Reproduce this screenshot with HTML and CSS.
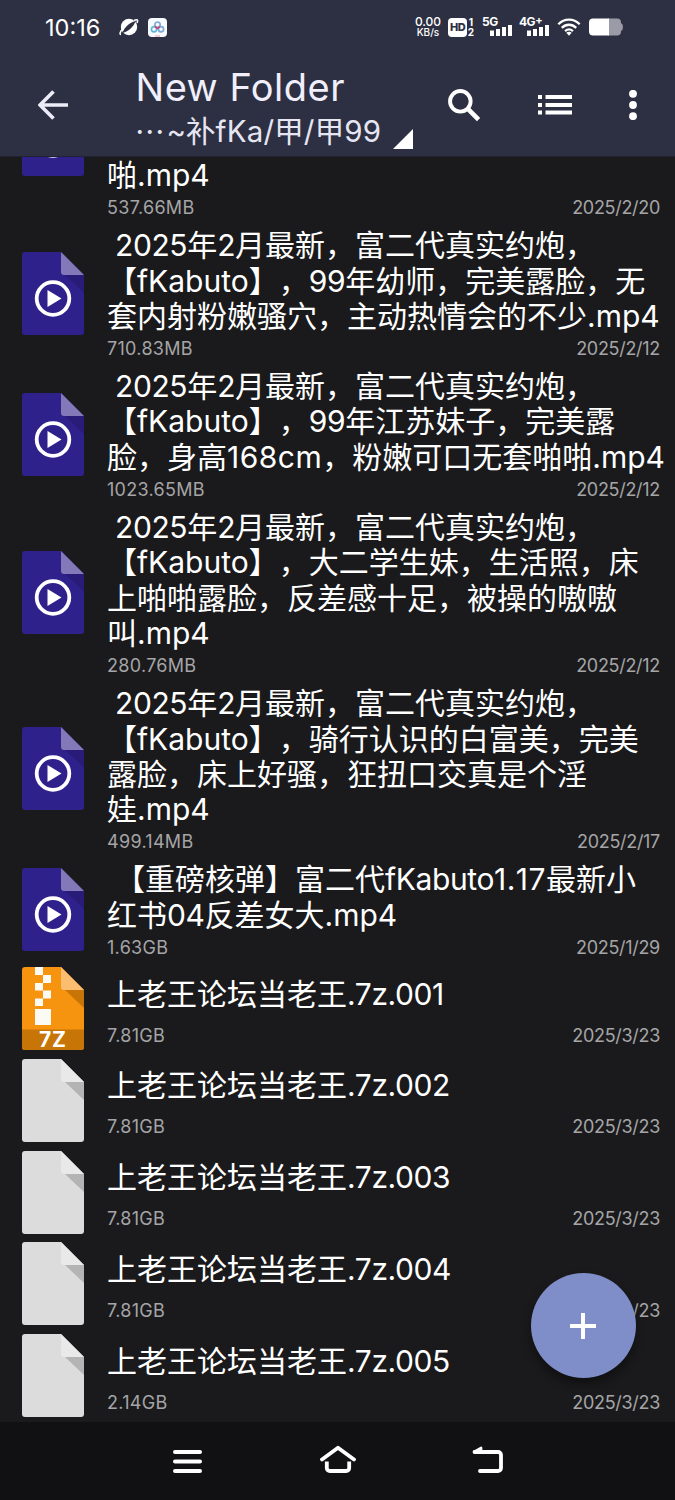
FILE: index.html
```html
<!DOCTYPE html>
<html lang="zh-CN">
<head>
<meta charset="utf-8">
<title>New Folder</title>
<link rel="stylesheet" href="styles.css">
</head>
<body>
<svg class="defs" width="0" height="0">
  <symbol id="video" viewBox="0 0 62 83">
    <path fill="#2f218b" d="M3 0H39L62 23V80a3 3 0 0 1-3 3H3a3 3 0 0 1-3-3V3a3 3 0 0 1 3-3Z"/>
    <path fill="#291c78" d="M43 23H62V41Z"/>
    <path fill="#8378b8" d="M39 0L62 23H42a3 3 0 0 1-3-3Z"/>
    <circle cx="31" cy="46.500" r="16.300" fill="none" stroke="#fff" stroke-width="3.800"/>
    <path fill="#fff" d="M25.500 38V55L39.500 46.500Z"/>
  </symbol>
  <symbol id="zip" viewBox="0 0 62 83">
    <path fill="#f6930f" d="M3 0H39L62 23V80a3 3 0 0 1-3 3H3a3 3 0 0 1-3-3V3a3 3 0 0 1 3-3Z"/>
    <path fill="#c87508" d="M43 23H62V41Z"/>
    <path fill="#fbbd70" d="M39 0L62 23H42a3 3 0 0 1-3-3Z"/>
    <path fill="#c87508" d="M0 62.500H62V80a3 3 0 0 1-3 3H3a3 3 0 0 1-3-3Z"/>
    <path fill="#fbfaf5" d="M13 0h8v8h-8zM21 8h8v8h-8zM13 16h8v7.500h-8zM21 23.500h8v8h-8zM13 31.500h8v7.500h-8zM13 42h16v16H13z"/>
    <text class="zip-label" x="31" y="80" text-anchor="middle">7Z</text>
  </symbol>
  <symbol id="file" viewBox="0 0 62 83">
    <path fill="#dcdcdd" d="M3 0H39L62 23V80a3 3 0 0 1-3 3H3a3 3 0 0 1-3-3V3a3 3 0 0 1 3-3Z"/>
    <path fill="#b4b4b5" d="M43 23H62V41Z"/>
    <path fill="#e9e9ea" d="M39 0L62 23H42a3 3 0 0 1-3-3Z"/>
  </symbol>
</svg>

<header class="header">
  <div class="status">
    <span class="clock">10:16</span>
    <svg class="planet" width="20" height="18" viewBox="0 0 20 18">
      <circle cx="10" cy="9" r="8.200" fill="#fff"/>
      <path d="M3.500 15C5 9.500 10.500 4.500 16.500 3C15 8.500 9.500 13.500 3.500 15Z" fill="#2d3042"/>
      <path d="M3 11.500C.8 14.500 .5 16.500 2 16.500M15 2.500C18 1 19.500 1.500 18 5" fill="none" stroke="#fff" stroke-width="1.600"/>
    </svg>
    <svg class="cloud" width="19" height="19" viewBox="0 0 19 19">
      <rect width="19" height="19" rx="4" fill="#f7fbff"/>
      <g fill="none" stroke-width="1.700"><circle cx="9.500" cy="6.700" r="2.700" stroke="#7dabd8"/><circle cx="6" cy="11.300" r="2.600" stroke="#62b6dd"/><circle cx="13" cy="11.300" r="2.600" stroke="#7aa9dc"/><path d="M7 8.500L9.500 10.500L12 8.500" stroke="#c64b7a"/></g>
      <path d="M7 18h5" stroke="#f0a9b5" stroke-width="1.200"/>
    </svg>
    <span class="rate"><span class="rate-value">0.00</span><span class="rate-unit">KB/s</span></span>
    <span class="hd">HD</span>
    <span class="sims"><span>1</span><span>2</span></span>
    <span class="signal five"><span class="net">5G</span><svg width="22" height="11" viewBox="0 0 22 11"><path fill="#fff" d="M0 5.500h4V11H0zM6 4h4v7H6zM12 2h4v9h-4zM18 0h4v11h-4z"/></svg></span>
    <span class="signal"><span class="net">4G<sup>+</sup></span><svg width="22" height="11" viewBox="0 0 22 11"><path fill="#fff" d="M0 5.500h4V11H0zM6 4h4v7H6zM12 2h4v9h-4zM18 0h4v11h-4z"/></svg></span>
    <svg class="wifi" width="24" height="18" viewBox="0 0 24 18"><g fill="none" stroke="#fff" stroke-width="2.300"><path d="M1.300 6.200C7.500 0 16.500 0 22.700 6.200"/><path d="M4.800 9.900C9 5.700 15 5.700 19.200 9.900"/><path d="M8.100 13.200C10.500 11 13.500 11 15.900 13.200"/></g><path d="M9.300 14.800q2.700-2 5.400 0L12 17.800Z" fill="#fff"/></svg>
    <svg class="battery" width="34" height="18" viewBox="0 0 34 18"><path fill="#9a9ba6" d="M19 .5h9a4 4 0 0 1 4 4V5q2 1 2 4t-2 4v.5a4 4 0 0 1-4 4h-9Z"/><path fill="#fff" d="M4 .5h16v17H4a4 4 0 0 1-4-4v-9a4 4 0 0 1 4-4Z"/></svg>
  </div>
  <div class="toolbar">
    <svg class="back" width="30" height="30" viewBox="0 0 30 30"><path d="M30 15H2.500M15.500 1.500L2 15L15.500 28.500" fill="none" stroke="#ecebf8" stroke-width="3.700"/></svg>
    <div class="heading">
      <div class="folder">New Folder</div>
      <div class="path"><span class="dots">···</span>~补<span class="pl">fKa/</span>甲<span class="pl">/</span>甲<span class="pl">99</span></div>
    </div>
    <svg class="corner" width="20" height="20" viewBox="0 0 20 20"><path d="M20 0V20H0Z" fill="#fff"/></svg>
    <svg class="search" width="33" height="33" viewBox="0 0 34 34"><g fill="none" stroke="#fff"><circle cx="12.700" cy="12.700" r="10.600" stroke-width="4"/><path d="M20.500 20.500L31.500 31.500" stroke-width="4.800"/></g></svg>
    <svg class="listicon" width="34" height="20" viewBox="0 0 34 20"><path fill="#fff" d="M0 0h4v4H0zM7.500 0H34v4H7.500zM0 8h4v4H0zM7.500 8H34v4H7.500zM0 15.500h4v4H0zM7.500 15.500H34v4H7.500z"/></svg>
    <svg class="more" width="8" height="30" viewBox="0 0 8 30"><g fill="#fff"><circle cx="4" cy="3.800" r="3.900"/><circle cx="4" cy="15" r="3.900"/><circle cx="4" cy="26.200" r="3.900"/></g></svg>
  </div>
</header>

<main class="list">
  <div class="row clipped"><svg class="icon"><use href="#video"/></svg><div class="info"><div class="name">啪<i class="loose">.mp4</i></div><div class="meta"><span>537.66MB</span><span class="date">2025/2/20</span></div></div></div>
  <div class="row"><svg class="icon"><use href="#video"/></svg><div class="info"><div class="name"><i> 2025</i>年<i>2</i>月最新，富二代真实约炮，<br>【<i class="loose">fKabuto</i>】，<i>99</i>年幼师，完美露脸，无<br>套内射粉嫩骚穴，主动热情会的不少<i class="loose">.mp4</i></div><div class="meta"><span>710.83MB</span><span class="date">2025/2/12</span></div></div></div>
  <div class="row"><svg class="icon"><use href="#video"/></svg><div class="info"><div class="name"><i> 2025</i>年<i>2</i>月最新，富二代真实约炮，<br>【<i class="loose">fKabuto</i>】，<i>99</i>年江苏妹子，完美露<br>脸，身高<i class="wide">168cm</i>，粉嫩可口无套啪啪<i class="loose">.mp4</i></div><div class="meta"><span>1023.65MB</span><span class="date">2025/2/12</span></div></div></div>
  <div class="row"><svg class="icon"><use href="#video"/></svg><div class="info"><div class="name"><i> 2025</i>年<i>2</i>月最新，富二代真实约炮，<br>【<i class="loose">fKabuto</i>】，大二学生妹，生活照，床<br>上啪啪露脸，反差感十足，被操的嗷嗷<br>叫<i class="loose">.mp4</i></div><div class="meta"><span>280.76MB</span><span class="date">2025/2/12</span></div></div></div>
  <div class="row"><svg class="icon"><use href="#video"/></svg><div class="info"><div class="name"><i> 2025</i>年<i>2</i>月最新，富二代真实约炮，<br>【<i class="loose">fKabuto</i>】，骑行认识的白富美，完美<br>露脸，床上好骚，狂扭口交真是个淫<br>娃<i class="loose">.mp4</i></div><div class="meta"><span>499.14MB</span><span class="date">2025/2/17</span></div></div></div>
  <div class="row"><svg class="icon"><use href="#video"/></svg><div class="info"><div class="name"><i> </i>【重磅核弹】富二代<i>fKabuto</i><i class="wide">1.17</i>最新小<br>红书<i>04</i>反差女大<i class="loose">.mp4</i></div><div class="meta"><span>1.63GB</span><span class="date">2025/1/29</span></div></div></div>
  <div class="row single"><svg class="icon"><use href="#zip"/></svg><div class="info"><div class="name">上老王论坛当老王<i>.7z.001</i></div><div class="meta"><span>7.81GB</span><span class="date">2025/3/23</span></div></div></div>
  <div class="row single"><svg class="icon"><use href="#file"/></svg><div class="info"><div class="name">上老王论坛当老王<i>.7z.002</i></div><div class="meta"><span>7.81GB</span><span class="date">2025/3/23</span></div></div></div>
  <div class="row single"><svg class="icon"><use href="#file"/></svg><div class="info"><div class="name">上老王论坛当老王<i>.7z.003</i></div><div class="meta"><span>7.81GB</span><span class="date">2025/3/23</span></div></div></div>
  <div class="row single"><svg class="icon"><use href="#file"/></svg><div class="info"><div class="name">上老王论坛当老王<i>.7z.004</i></div><div class="meta"><span>7.81GB</span><span class="date">2025/3/23</span></div></div></div>
  <div class="row single"><svg class="icon"><use href="#file"/></svg><div class="info"><div class="name">上老王论坛当老王<i>.7z.005</i></div><div class="meta"><span>2.14GB</span><span class="date">2025/3/23</span></div></div></div>
</main>

<button class="fab" aria-label="add"><svg width="28" height="28" viewBox="0 0 28 28"><path d="M14 1V27M1 14H27" stroke="#fff" stroke-width="4"/></svg></button>

<nav class="nav">
  <svg width="36" height="36" viewBox="0 0 36 36"><path d="M5 9H30M5 18.500H30M5 28H30" stroke="#fff" stroke-width="4" stroke-linecap="round"/></svg>
  <svg width="36" height="36" viewBox="0 0 36 36"><g fill="none" stroke="#fff" stroke-width="3.800" stroke-linecap="round" stroke-linejoin="round"><path d="M2 16.500L18 4.800L34 16.500"/><path stroke-linecap="butt" d="M6.800 18.500V25a3 3 0 0 0 3 3H26.200a3 3 0 0 0 3-3V18.500"/></g></svg>
  <svg width="36" height="36" viewBox="0 0 36 36"><path d="M4.500 9H28a3 3 0 0 1 3 3V25a3 3 0 0 1-3 3H10" fill="none" stroke="#fff" stroke-width="3.800" stroke-linecap="round"/><path d="M3 8L11 3.500q2 0 1.200 4L11 10H4Z" fill="#fff"/></svg>
</nav>
</body>
</html>
```

FILE: styles.css
```css
* { box-sizing: border-box; }
body {
  margin: 0;
  width: 675px;
  height: 1500px;
  overflow: hidden;
  display: flex;
  flex-direction: column;
  position: relative;
  background: #1a1a1c;
  color: #fff;
  font-family: Inter, "Noto Sans CJK SC", sans-serif;
}
svg { display: block; flex: none; }
.defs { position: absolute; }

.header {
  height: 157px;
  flex: none;
  background: #2d3042;
  border-bottom: 1px solid #202230;
}
.status {
  height: 54px;
  display: flex;
  align-items: center;
  padding-left: 45px;
}
.clock { font-size: 23.500px; width: 74px; letter-spacing: 0; white-space: nowrap; }
.cloud { margin-left: 9px; }
.rate { margin-left: 247px; width: 28px; display: flex; flex-direction: column; align-items: center; white-space: nowrap; }
.rate-value { font-size: 12px; line-height: 11px; font-weight: 500; margin-top: -2px; }
.rate-unit { font-size: 10px; line-height: 10px; font-weight: 500; }
.hd {
  width: 19px;
  height: 19px;
  margin-left: 6px;
  border-radius: 4px;
  background: #fff;
  color: #2d3042;
  font-size: 11px;
  line-height: 19px;
  font-weight: 800;
  text-align: center;
  letter-spacing: -0.500px;
}
.sims { width: 8px; display: flex; flex-direction: column; align-items: center; font-size: 10px; line-height: 10px; font-weight: 700; }
.signal { width: 30px; height: 20px; margin-left: 7px; display: flex; flex-direction: column; align-items: flex-end; }
.net { align-self: flex-start; height: 8px; font-size: 12px; line-height: 10px; font-weight: 700; white-space: nowrap; letter-spacing: -0.500px; }
.net sup { font-size: 11px; line-height: 0; vertical-align: 2px; }
.wifi { margin-left: 8px; }
.battery { margin-left: 8px; }

.toolbar {
  height: 102px;
  display: flex;
  align-items: center;
  padding-left: 37.500px;
}
.heading { margin-left: 68px; width: 246px; white-space: nowrap; }
.folder { font-size: 38px; line-height: 44px; color: #f0effb; margin-top: 8px; letter-spacing: 0.500px; }
.path { display: flex; font-size: 29.500px; line-height: 44px; color: #e6e6f2; }
.dots { width: 31px; letter-spacing: 1.500px; }
.pl { letter-spacing: 0.200px; }
.corner { margin: 75px 0 0 11px; align-self: flex-start; }
.search { margin-left: 35px; }
.listicon { margin-left: 57px; }
.more { margin-left: 57px; }

.list {
  flex: none;
  height: 1264.500px;
  overflow: hidden;
  display: flex;
  flex-direction: column;
  justify-content: flex-end;
}
.row {
  flex: none;
  display: flex;
  align-items: center;
  padding-left: 21.500px;
}
.icon { width: 62px; height: 83px; }
.info {
  align-self: stretch;
  flex: 1;
  min-width: 0;
  display: flex;
  flex-direction: column;
  margin-left: 23.500px;
  padding: 3.500px 15px 2px 0;
}
.clipped { height: 176.200px; }
.clipped .info { justify-content: flex-end; }
.name {
  font-size: 30px;
  line-height: 35.300px;
  white-space: nowrap;
  font-family: "Noto Sans CJK SC", sans-serif;
  text-spacing-trim: space-all;
}
.name i {
  font-family: Inter, sans-serif;
  font-style: normal;
  line-height: 0;
  white-space: pre;
  letter-spacing: -0.400px;
}
.name .loose { letter-spacing: 0; }
.name .wide { letter-spacing: 0.500px; font-kerning: none; }
.meta {
  height: 25.500px;
  margin-top: 4px;
  display: flex;
  justify-content: space-between;
  align-items: center;
  font-size: 18px;
  line-height: 22px;
  letter-spacing: 0.300px;
  color: #a5a5a7;
}
.meta .date { letter-spacing: -0.300px; }
.single { height: 91.800px; }
.single .name { padding-top: 8.500px; }
.single .meta { margin-top: auto; margin-bottom: 4px; }
.zip-label { font: 700 21px Inter, sans-serif; fill: #fff; letter-spacing: 1px; }

.fab {
  position: absolute;
  left: 530.500px;
  top: 1273px;
  width: 105px;
  height: 105px;
  border: 0;
  border-radius: 50%;
  background: #7f8dc9;
  display: flex;
  align-items: center;
  justify-content: center;
  box-shadow: 0 6px 10px rgba(0, 0, 0, .4);
}
.nav {
  flex: 1;
  background: #111113;
  display: flex;
  justify-content: center;
  align-items: center;
  gap: 114px;
}
```
